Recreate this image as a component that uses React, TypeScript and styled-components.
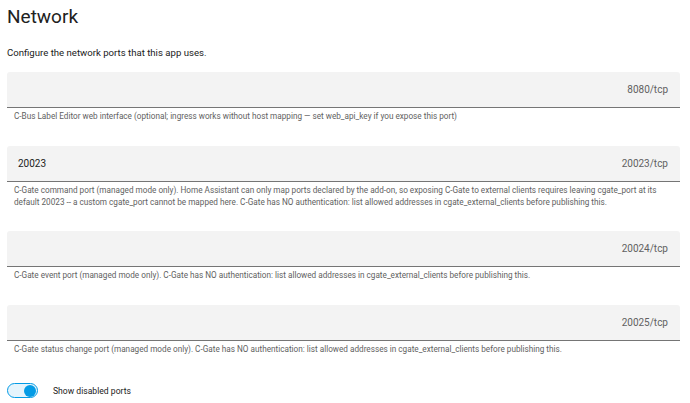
import React from "react";
import styled, { createGlobalStyle } from "styled-components";

const Global = createGlobalStyle`
  html, body { margin: 0; padding: 0; background: #ffffff; }
  body { font-family: Roboto, "Noto Sans", "Liberation Sans", sans-serif; color: #212121; }
`;

const Page = styled.div`
  width: 690px;
  height: 403px;
  box-sizing: border-box;
  padding: 6px 10px 0 7px;
  overflow: hidden;
`;

const Title = styled.h1`
  margin: 0;
  font-size: 19px;
  font-weight: 400;
  line-height: 22px;
  color: #212121;
`;

const Intro = styled.p`
  margin: 18px 0 12px;
  font-size: 9.6px;
  line-height: 14px;
  color: #212121;
`;

const Fields = styled.div`
  display: flex;
  flex-direction: column;
`;

const Field = styled.div`
  display: flex;
  flex-direction: column;
  margin-bottom: 23.5px;
`;

const Box = styled.div`
  height: 36px;
  box-sizing: border-box;
  background: #f3f3f3;
  border-bottom: 1px solid #757575;
  border-radius: 3px 3px 0 0;
  display: flex;
  align-items: center;
  justify-content: space-between;
  padding: 0 12px 0 11px;
  font-size: 10px;
`;

const Value = styled.span`
  color: #212121;
`;

const Suffix = styled.span`
  color: #616161;
`;

const Helper = styled.div`
  padding: 2px 7px 0;
  font-size: 8.2px;
  line-height: 12px;
  color: #616161;
`;

const ToggleRow = styled.div`
  display: flex;
  align-items: center;
  gap: 15px;
  margin-top: 5px;
`;

const Track = styled.div`
  width: 31px;
  height: 15px;
  box-sizing: border-box;
  border: 1.5px solid #039be5;
  border-radius: 8px;
  background: #e5f4fc;
  display: flex;
  align-items: center;
  justify-content: flex-end;
  padding: 0 1px;
`;

const Thumb = styled.div`
  width: 12px;
  height: 12px;
  border-radius: 50%;
  background: #039be5;
`;

const ToggleLabel = styled.span`
  font-size: 8.6px;
  color: #212121;
`;

const ports = [
  {
    value: "",
    suffix: "8080/tcp",
    help: [
      "C-Bus Label Editor web interface (optional; ingress works without host mapping — set web_api_key if you expose this port)",
    ],
  },
  {
    value: "20023",
    suffix: "20023/tcp",
    help: [
      "C-Gate command port (managed mode only). Home Assistant can only map ports declared by the add-on, so exposing C-Gate to external clients requires leaving cgate_port at its",
      "default 20023 -- a custom cgate_port cannot be mapped here. C-Gate has NO authentication: list allowed addresses in cgate_external_clients before publishing this.",
    ],
  },
  {
    value: "",
    suffix: "20024/tcp",
    help: [
      "C-Gate event port (managed mode only). C-Gate has NO authentication: list allowed addresses in cgate_external_clients before publishing this.",
    ],
  },
  {
    value: "",
    suffix: "20025/tcp",
    help: [
      "C-Gate status change port (managed mode only). C-Gate has NO authentication: list allowed addresses in cgate_external_clients before publishing this.",
    ],
  },
];

export default function App() {
  return (
    <>
      <Global />
      <Page>
        <Title>Network</Title>
        <Intro>Configure the network ports that this app uses.</Intro>
        <Fields>
          {ports.map((p) => (
            <Field key={p.suffix}>
              <Box>
                <Value>{p.value}</Value>
                <Suffix>{p.suffix}</Suffix>
              </Box>
              <Helper>
                {p.help.map((l) => (
                  <div key={l}>{l}</div>
                ))}
              </Helper>
            </Field>
          ))}
        </Fields>
        <ToggleRow>
          <Track>
            <Thumb />
          </Track>
          <ToggleLabel>Show disabled ports</ToggleLabel>
        </ToggleRow>
      </Page>
    </>
  );
}
